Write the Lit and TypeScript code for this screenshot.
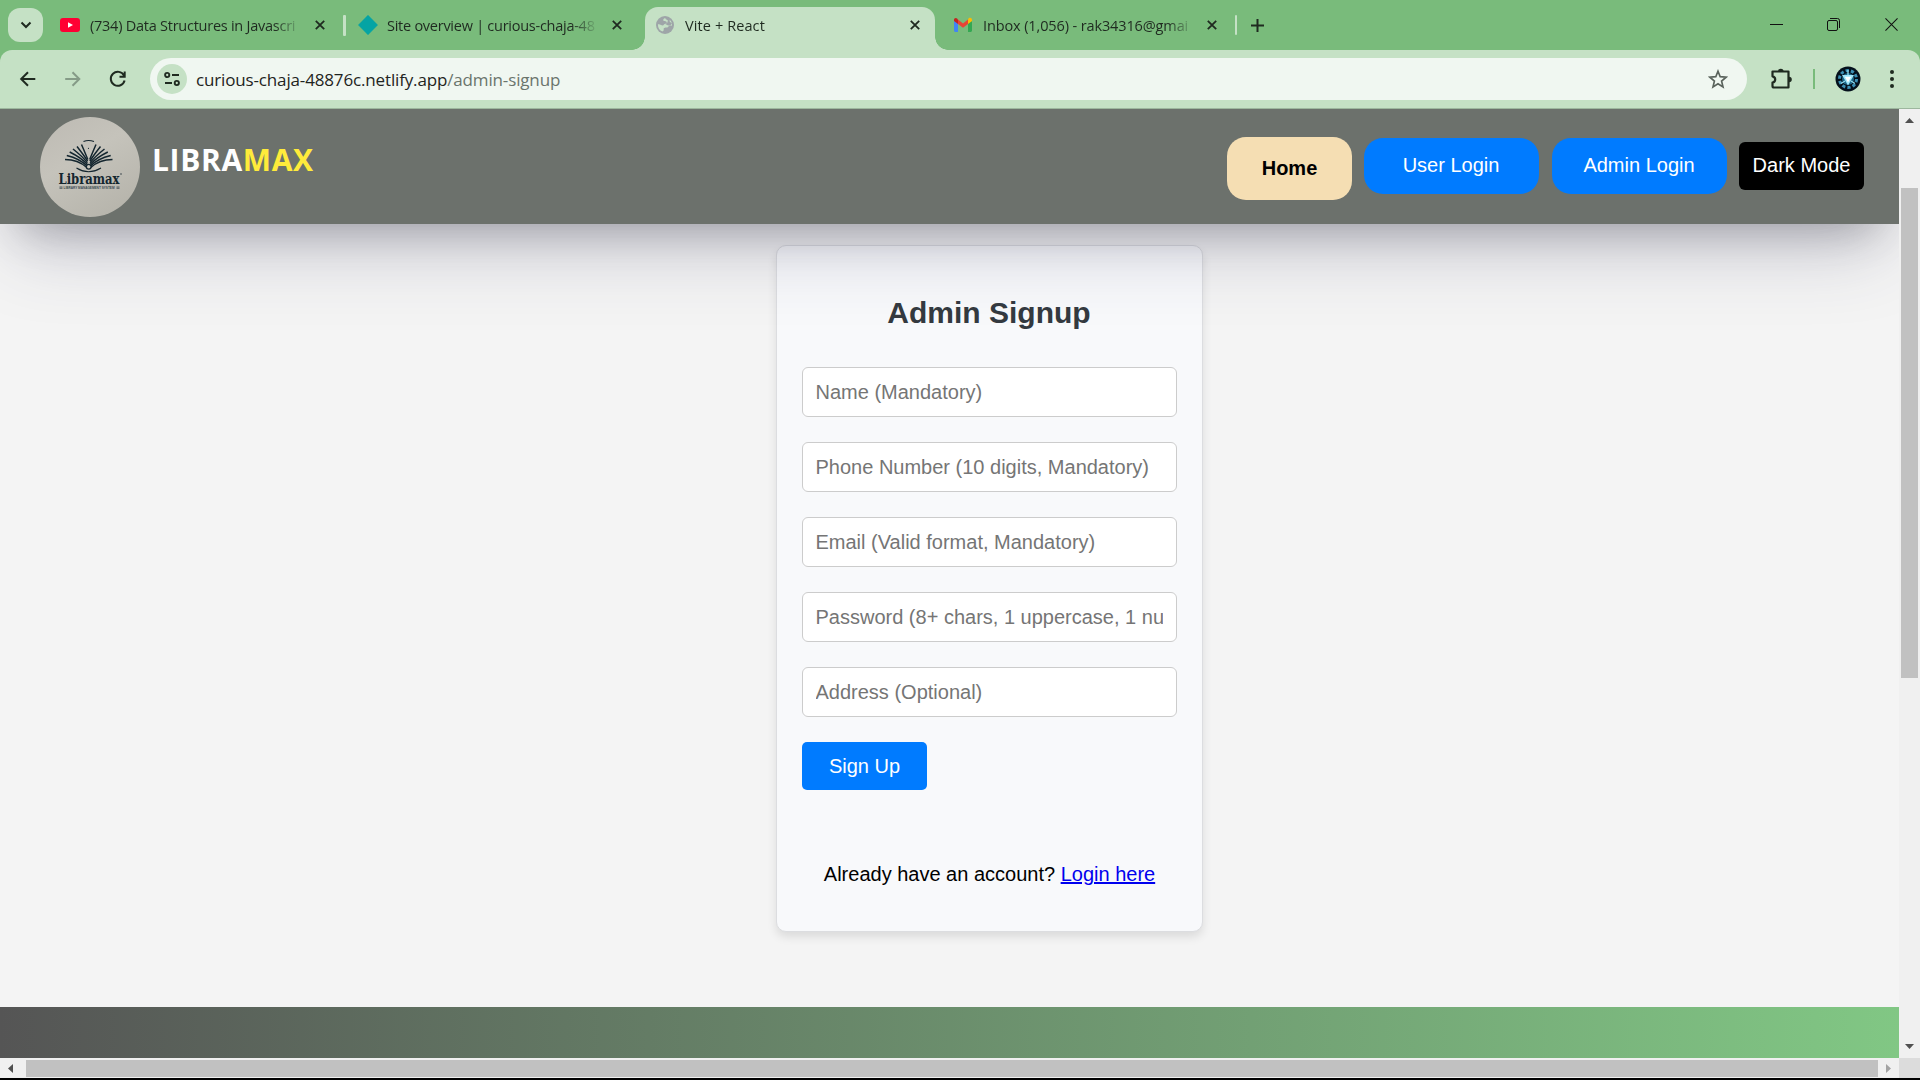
import { LitElement, html, css, svg } from "lit";
import { customElement } from "lit/decorators.js";

const cross = html`<svg class="x" width="10" height="10" viewBox="0 0 10 10"><path d="M.8.8 9.2 9.2M9.2.8.8 9.2" stroke="#1f2a20" stroke-width="1.8" fill="none"/></svg>`;

const youtube = html`<svg width="20" height="20" viewBox="0 0 20 20"><rect x="0" y="3" width="20" height="14" rx="3" fill="#ff0033"/><path d="M8 7.2v5.6l5-2.8z" fill="#fff"/></svg>`;
const netlify = html`<svg width="20" height="20" viewBox="0 0 20 20"><path d="M10 .2 19.6 10 10 19.8.4 10z" fill="#05a4a4" stroke="#05a4a4" stroke-linejoin="round" stroke-width=".5"/></svg>`;
const globe = html`<svg width="20" height="20" viewBox="0 0 20 20"><circle cx="10" cy="10" r="9" fill="#9ea5a8"/><path d="M9.500 3.200c-1.500.9-1.600 2.300-.6 2.900.9.500 2.300.1 2.800 1 .4.800-.3 1.600-1.800 1.800-1.300.1-1 1.500-2.100 1.600-1.200.1-2.200-1.300-4-1.300h-.9c-.2 3.800 1.800 6.200 4.500 7.300.8-.5 1.500-.9 1.300-1.900-.2-1 .1-1.800 1.200-1.900 1-.1 2 .1 2.900-.4.9-.5.8-1.500 1.700-1.700.9-.2 1.600.1 2.500.1.300-3.500-1.400-5.500-3.200-6.500-1.300-.8-2.800-1.200-4.300-1z" fill="#c5e1c6"/><path d="M10.500 1.800c1.500 0 3.200.7 4.300 1.700.3 1.200-.3 2-.1 3 .2 1 1.800 1.200 2.300 2l-1.600 1.800-2.300.2-2.800-1.500 2-1.300.6-2.300-2.300-1.500z" fill="#9ea5a8"/></svg>`;
const gmail = html`<svg width="20" height="20" viewBox="0 0 20 20"><path d="M1 6v9.500C1 16.300 1.700 17 2.500 17H5V8z" fill="#4285f4"/><path d="M15 8v9h2.500c.8 0 1.500-.7 1.500-1.500V6z" fill="#34a853"/><path d="M15 4.600V9l4-3V4.900c0-1.900-2-2.700-3.300-1.600z" fill="#fbbc04"/><path d="M5 9V4.600l5 3.800 5-3.800V9l-5 3.800z" fill="#ea4335"/><path d="M1 4.900V6l4 3V4.600l-.7-.9C3 2.300 1 3.100 1 4.900z" fill="#c5221f"/></svg>`;

const tabs = [
  { icon: youtube, label: "(734) Data Structures in Javascri", cls: "t1" },
  { icon: netlify, label: "Site overview | curious-chaja-48", cls: "t2" },
  { icon: globe, label: "Vite + React", cls: "t3 active" },
  { icon: gmail, label: "Inbox (1,056) - rak34316@gmai", cls: "t4" },
];

const fields = [
  "Name (Mandatory)",
  "Phone Number (10 digits, Mandatory)",
  "Email (Valid format, Mandatory)",
  "Password (8+ chars, 1 uppercase, 1 number)",
  "Address (Optional)",
];

@customElement("browser-chrome")
class BrowserChrome extends LitElement {
  static styles = css`
    :host { display: block; height: 109px; box-sizing: border-box; background: #79bb7b; border-bottom: 1px solid #9db79e; font-family: "Open Sans", "Noto Sans", sans-serif; color: #1f2a20; }
    svg { display: block; flex: none; }
    .strip { display: flex; height: 50px; }
    .search { width: 35px; height: 34px; margin: 8px 7px 0 8px; border-radius: 12px; background: #c5e1c5; display: flex; align-items: center; justify-content: center; }
    .tab { display: flex; align-items: center; box-sizing: border-box; height: 50px; position: relative; }
    .t1 { width: 293px; padding-left: 10px; }
    .t2 { width: 302px; padding-left: 12px; border-left: 3px solid transparent; }
    .t2::before { content: ""; position: absolute; left: -3px; top: 15px; width: 3px; height: 21px; border-radius: 1px; background: #c5e1c5; }
    .t3 { width: 290px; padding-left: 10px; }
    .t4 { width: 300px; padding-left: 18px; }
    .active::before { content: ""; position: absolute; inset: 7px 0 0 0; border-radius: 13px 13px 0 0; background: #c5e1c5; z-index: 0; }
    .active > * { position: relative; }
    .active .foot { position: absolute; bottom: 0; width: 13px; height: 13px; }
    .foot.l { left: -13px; background: radial-gradient(circle at 0 0, transparent 12.500px, #c5e1c5 13px); }
    .foot.r { right: -13px; background: radial-gradient(circle at 100% 0, transparent 12.500px, #c5e1c5 13px); }
    .label { width: 208px; margin: 0 17px 0 10px; padding-top: 2px; white-space: nowrap; font-size: 14.500px; line-height: 22px; letter-spacing: -0.25px; -webkit-mask-image: linear-gradient(90deg, #000 184px, transparent 212px); }
    .t2 .label { margin: 0 17px 0 9px; letter-spacing: -0.26px; }
    .t3 .label { letter-spacing: 0.1px; }
    .t4 .label { margin-right: 16px; letter-spacing: -0.12px; }
    .plusbox { display: flex; align-items: center; height: 50px; gap: 14px; }
    .sep { width: 2px; height: 20px; background: #c5e1c5; border-radius: 1px; }
    .controls { display: flex; align-items: center; margin-left: auto; padding-right: 22px; gap: 44px; height: 49px; }
    .controls svg:nth-child(2) { margin-right: 1px; }
    .bar { display: flex; align-items: center; height: 58px; background: #c5e1c5; border-radius: 12px 12px 0 0; }
    .nav { display: flex; gap: 25px; padding-left: 18px; width: 132px; }
    .omni { width: 1597px; height: 42px; border-radius: 21px; background: #f0f7f1; display: flex; align-items: center; box-sizing: border-box; padding: 0 19px 0 7px; }
    .chip { width: 30px; height: 30px; border-radius: 50%; background: #c5e1c5; display: flex; align-items: center; justify-content: center; }
    .url { margin-left: 9px; flex: 1; padding-top: 2px; font-size: 17px; line-height: 26px; letter-spacing: -0.15px; white-space: nowrap; color: #1f2421; }
    .path { color: #6a746c; }
    .right { display: flex; align-items: center; flex: 1; padding-left: 23px; }
    .div { width: 2px; height: 20px; background: #79bb7b; margin: 0 20px 0 19px; }
    .dots { margin-left: 27px; }
  `;
  render() {
    return html`
      <div class="strip">
        <div class="search"><svg width="12" height="8" viewBox="0 0 12 8"><path d="m1.500 1.500 4.500 4.500 4.500-4.500" stroke="#1f2a20" stroke-width="2" fill="none"/></svg></div>
        ${tabs.map((t) => html`<div class="tab ${t.cls}">${t.cls.includes("active") ? html`<i class="foot l"></i><i class="foot r"></i>` : ""}${t.icon}<span class="label">${t.label}</span>${cross}</div>`)}
        <div class="plusbox"><span class="sep"></span><svg width="13" height="13" viewBox="0 0 13 13"><path d="M6.500 0v13M0 6.500h13" stroke="#1f2a20" stroke-width="2"/></svg></div>
        <div class="controls">
          <svg width="13" height="13" viewBox="0 0 13 13"><path d="M0 6.500h13" stroke="#111"/></svg>
          <svg width="13" height="13" viewBox="0 0 13 13" fill="none" stroke="#111"><rect x=".5" y="2.500" width="10" height="10" rx="1.500"/><path d="M3 .5h7.500a2 2 0 0 1 2 2V10"/></svg>
          <svg width="13" height="13" viewBox="0 0 14 14"><path d="m.5.5 13 13M13.500.5l-13 13" stroke="#111" stroke-width="1.100"/></svg>
        </div>
      </div>
      <div class="bar">
        <div class="nav">
          <svg width="20" height="20" viewBox="0 0 20 20" fill="none" stroke="#1f2a20" stroke-width="2"><path d="M17.300 10H3.500M10 3.200 3.200 10l6.800 6.800"/></svg>
          <svg width="20" height="20" viewBox="0 0 20 20" fill="none" stroke="#859b87" stroke-width="2"><path d="M2.200 10h13.800M9.500 3.200l6.800 6.800-6.800 6.800"/></svg>
          <svg width="20" height="20" viewBox="0 0 20 20" fill="none" stroke="#1f2a20" stroke-width="2"><path d="M16 6.500A7 7 0 1 0 16.600 11.500M16.700 2.500v5.200h-5.200"/></svg>
        </div>
        <div class="omni">
          <span class="chip"><svg width="18" height="18" viewBox="0 0 18 18" fill="none" stroke="#1f2a20" stroke-width="1.900"><circle cx="4.200" cy="5" r="2.100"/><path d="M9 5h7M2 13h7"/><circle cx="13.800" cy="13" r="2.100"/></svg></span>
          <span class="url">curious-chaja-48876c.netlify.app<span class="path">/admin-signup</span></span>
          <svg width="20" height="20" viewBox="0 0 20 20"><path d="m10 2.200 2.200 5.500 5.900.5-4.500 3.900 1.400 5.800-5-3.100-5 3.100 1.400-5.800L1.900 8.200l5.900-.5z" fill="none" stroke="#5a635c" stroke-width="1.700"/></svg>
        </div>
        <div class="right">
          <svg width="24" height="24" viewBox="0 0 24 24"><path d="M4 4.500h14.500V20.500H4c-1 0-1.500-.5-1.500-1.500v-3.500c3.600-.7 3.600-5.500 0-6.200V4.500z" fill="none" stroke="#1f2a20" stroke-width="2.200" stroke-linejoin="round"/><path d="M8 4.500a2.800 2.800 0 0 1 5.600 0zM19 9.700a2.800 2.800 0 0 1 0 5.600z" fill="#1f2a20"/></svg>
          <span class="div"></span>
          <svg width="26" height="26" viewBox="0 0 26 26"><circle cx="13" cy="13" r="12.500" fill="#04101c"/><circle cx="13" cy="13" r="8.500" fill="none" stroke="#3b8fb4" stroke-width="3" stroke-dasharray="3.200 2.140"/><circle cx="13" cy="13" r="6" fill="#1e6687"/><path d="M7 9h12L13 19.500z" fill="#9ce4f8"/><path d="M9.800 10.800h6.400L13 16.500z" fill="#fff"/><path d="M13 4v5M6 17.500l4-2.500M20 17.500l-4-2.500" stroke="#91dcf0" stroke-width="1.300"/></svg>
          <svg class="dots" width="8" height="20" viewBox="0 0 8 20" fill="#1f2a20"><circle cx="4" cy="3" r="2"/><circle cx="4" cy="10" r="2"/><circle cx="4" cy="17" r="2"/></svg>
        </div>
      </div>`;
  }
}

@customElement("libramax-logo")
class LibramaxLogo extends LitElement {
  static styles = css`
    :host { display: block; width: 100px; height: 100px; border-radius: 50%; overflow: hidden; background: linear-gradient(150deg, #bdbab3, #c5c3bb 40%, #b3b1a8); }
    svg { display: block; }
    .name { font: bold 15px "DejaVu Serif", serif; fill: #14262f; }
    .sub { font: bold 3px "Liberation Sans", sans-serif; fill: #3b4a52; }
  `;
  render() {
    const tips = [
      [25, 42.500], [26.800, 38.500], [29.700, 35], [33, 32], [37, 29.500], [41.500, 27.500],
    ];
    const page = tips.map(([x, y], i) => svg`<path d="M${x} ${y}Q${38 + i * 1.600} ${42.500 - i * 0.900} ${46.800 + i * 0.200} ${50.500 - i * 1.600}"/>`);
    return html`<svg width="100" height="100" viewBox="0 0 100 100">
      <g fill="none" stroke="#14262f" stroke-width="1.500">
        <g>${page}</g><g transform="matrix(-1 0 0 1 97.500 0)">${page}</g>
        <path d="M43.500 24.500q5-2 10.500 0M36.500 51q12 7.500 24.500 0" stroke-width="1.100"/>
      </g>
      <circle cx="48.700" cy="49.800" r="3" fill="#14262f"/><circle cx="48.700" cy="49.800" r="1.700" fill="#c4c2ba"/>
      <circle cx="48.500" cy="31.300" r=".6" fill="#14262f"/><circle cx="81" cy="57" r=".7" fill="#14262f"/>
      <text class="name" x="18.500" y="67" textLength="61" lengthAdjust="spacingAndGlyphs">Libramax</text>
      <text class="sub" x="23.500" y="71.600" textLength="51" lengthAdjust="spacingAndGlyphs">LIBRARY MANAGEMENT SYSTEM</text>
      <path d="M19.500 70h3M19.500 71.300h3M76.500 70h3M76.500 71.300h3" stroke="#26363f" stroke-width=".7"/>
    </svg>`;
  }
}

@customElement("app-root")
class AppRoot extends LitElement {
  static styles = css`
    :host { display: block; width: 1920px; height: 1080px; overflow: hidden; background: #000; font-family: "Liberation Sans", Arial, sans-serif; font-size: 20px; line-height: 23px; }
    .view { display: grid; grid-template-columns: 1899px 21px; grid-template-rows: 949px 20px; height: 969px; }
    .page { display: flex; flex-direction: column; background: #f4f4f4; overflow: hidden; }
    .header { position: relative; z-index: 1; flex: none; display: flex; align-items: flex-start; height: 115px; box-sizing: border-box; padding: 8px 35px 0 40px; background: #6c716c; box-shadow: rgba(50, 50, 93, 0.25) 0 37.500px 75px -15px, rgba(0, 0, 0, 0.3) 0 22.500px 45px -22.500px; }
    .brand { margin: 21px 0 0 12px; font: bold 30px/44px "Open Sans", "Noto Sans", sans-serif; letter-spacing: 0.65px; color: #fff; white-space: nowrap; }
    .max { color: #ffeb3b; }
    .menu { display: flex; margin-left: auto; align-items: flex-start; }
    button { font: inherit; border: 0; padding: 0; margin: 0; color: #fff; }
    .home { width: 125px; height: 63px; margin: 20px 12px 0 0; border-radius: 19px; background: #f5deb3; color: #000; font-weight: bold; }
    .login { width: 175px; height: 56px; margin: 21px 13px 0 0; border-radius: 19px; background: #007bff; padding: 0 1px 2px 0; }
    .login + .login { margin-right: 12px; }
    .dark { width: 125px; height: 48px; margin-top: 25px; border-radius: 6px; background: #000; padding-bottom: 1px; }
    .main { flex: 1; display: flex; justify-content: center; align-items: flex-start; padding: 21px 0 0 79px; }
    .card { box-sizing: border-box; width: 427px; height: 687px; border: 1px solid #dcdde0; border-radius: 10px; background: #f8f9fb; box-shadow: 0 5px 10px rgba(0, 0, 0, 0.1); padding: 0 25px; display: flex; flex-direction: column; }
    h2 { margin: 49px 0 37px; font-size: 30px; line-height: 35px; text-align: center; color: #343a40; }
    .fields { display: flex; flex-direction: column; gap: 25px; }
    input { display: block; box-sizing: border-box; width: 375px; height: 50px; border: 1px solid #ccc; border-radius: 6px; padding: 0 12.500px 0 13px; font: inherit; background: #fff; }
    input::placeholder { color: #757575; opacity: 1; }
    .submit { width: 125px; height: 48px; margin-top: 25px; border-radius: 5px; background: #007bff; padding: 1px 0 0 1px; }
    .have { margin: 73px 0 0 1px; text-align: center; color: #000; }
    a { color: #0000ee; text-decoration: underline; }
    .footer { flex: none; height: 51px; background: linear-gradient(90deg, #555, #81c784); }
    .vbar, .hbar { background: #f0f0f0; display: flex; align-items: center; }
    .vbar { flex-direction: column; box-sizing: border-box; padding: 9px 0; }
    .vthumb { width: 17px; height: 490px; margin: 65px 0 auto; background: #c1c1c1; }
    .hbar { padding: 0 8px; gap: 13px; }
    .hthumb { flex: 1; height: 17px; margin-right: -5px; background: #c1c1c1; }
    .corner { background: #dcdcdc; }
    svg { display: block; }
  `;
  render() {
    return html`
      <browser-chrome></browser-chrome>
      <div class="view">
        <div class="page">
          <div class="header">
            <libramax-logo></libramax-logo>
            <div class="brand">LIBRA<span class="max">MAX</span></div>
            <div class="menu">
              <button class="home">Home</button>
              <button class="login">User Login</button>
              <button class="login">Admin Login</button>
              <button class="dark">Dark Mode</button>
            </div>
          </div>
          <div class="main">
            <div class="card">
              <h2>Admin Signup</h2>
              <div class="fields">${fields.map((f) => html`<input placeholder=${f} />`)}</div>
              <button class="submit">Sign Up</button>
              <p class="have">Already have an account? <a href="#">Login here</a></p>
            </div>
          </div>
          <div class="footer"></div>
        </div>
        <div class="vbar">
          <svg width="9" height="5" viewBox="0 0 9 5"><path d="M0 5 4.500 0 9 5z" fill="#505050"/></svg>
          <div class="vthumb"></div>
          <svg width="9" height="5" viewBox="0 0 9 5"><path d="M0 0 4.500 5 9 0z" fill="#505050"/></svg>
        </div>
        <div class="hbar">
          <svg width="5" height="9" viewBox="0 0 5 9"><path d="M5 0 0 4.500 5 9z" fill="#505050"/></svg>
          <div class="hthumb"></div>
          <svg width="5" height="9" viewBox="0 0 5 9"><path d="M0 0 5 4.500 0 9z" fill="#a3a3a3"/></svg>
        </div>
        <div class="corner"></div>
      </div>`;
  }
}
